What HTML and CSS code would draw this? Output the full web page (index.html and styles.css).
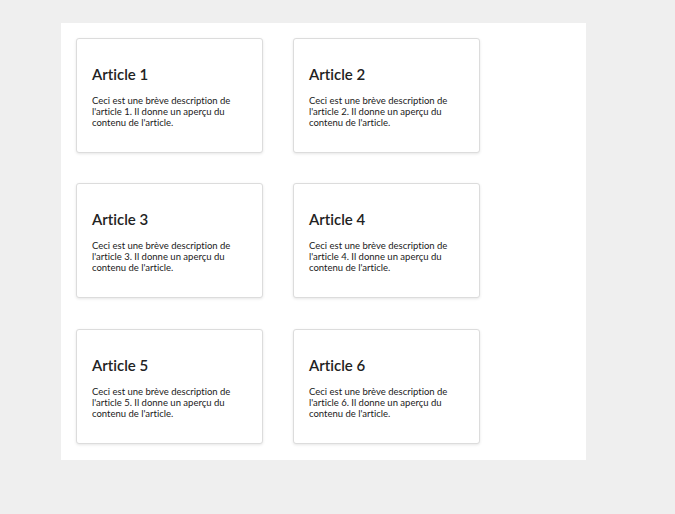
FILE: index.html
```html
<!DOCTYPE html>
<html lang="fr">
<head>
<meta charset="utf-8">
<title>Articles</title>
<link rel="stylesheet" href="styles.css">
</head>
<body>
<main class="container">
  <div class="grid">
    <article class="card">
      <h3 class="card-title">Article 1</h3>
      <p class="card-text">Ceci est une brève description de l'article 1. Il donne un aperçu du contenu de l'article.</p>
    </article>
    <article class="card">
      <h3 class="card-title">Article 2</h3>
      <p class="card-text">Ceci est une brève description de l'article 2. Il donne un aperçu du contenu de l'article.</p>
    </article>
    <article class="card">
      <h3 class="card-title">Article 3</h3>
      <p class="card-text">Ceci est une brève description de l'article 3. Il donne un aperçu du contenu de l'article.</p>
    </article>
    <article class="card">
      <h3 class="card-title">Article 4</h3>
      <p class="card-text">Ceci est une brève description de l'article 4. Il donne un aperçu du contenu de l'article.</p>
    </article>
    <article class="card">
      <h3 class="card-title">Article 5</h3>
      <p class="card-text">Ceci est une brève description de l'article 5. Il donne un aperçu du contenu de l'article.</p>
    </article>
    <article class="card">
      <h3 class="card-title">Article 6</h3>
      <p class="card-text">Ceci est une brève description de l'article 6. Il donne un aperçu du contenu de l'article.</p>
    </article>
  </div>
</main>
</body>
</html>
```
FILE: styles.css
```css
html, body {
  margin: 0;
  padding: 0;
}
body {
  background: #efefef;
  font-family: Lato, "Open Sans", sans-serif;
  color: #1a1a1a;
  padding: 23px 0 0 61px;
  font-variant-ligatures: none;
}
.container {
  width: 525px;
  box-sizing: border-box;
  background: #ffffff;
  padding: 15px 15px 16px;
}
.grid {
  display: grid;
  grid-template-columns: 187px 187px;
  column-gap: 30px;
  row-gap: 30.4px;
}
.card {
  box-sizing: border-box;
  height: 115px;
  border: 1px solid #dcdcdc;
  border-radius: 3px;
  box-shadow: 0 1px 3px rgba(0, 0, 0, 0.1);
  padding: 26px 15px 15px;
  background: #fff;
}
.card-title {
  margin: 0 0 12px;
  font-size: 15px;
  line-height: 18px;
  font-weight: 600;
  color: #222;
}
.card-text {
  margin: 0;
  font-size: 9.5px;
  line-height: 11px;
}
```
